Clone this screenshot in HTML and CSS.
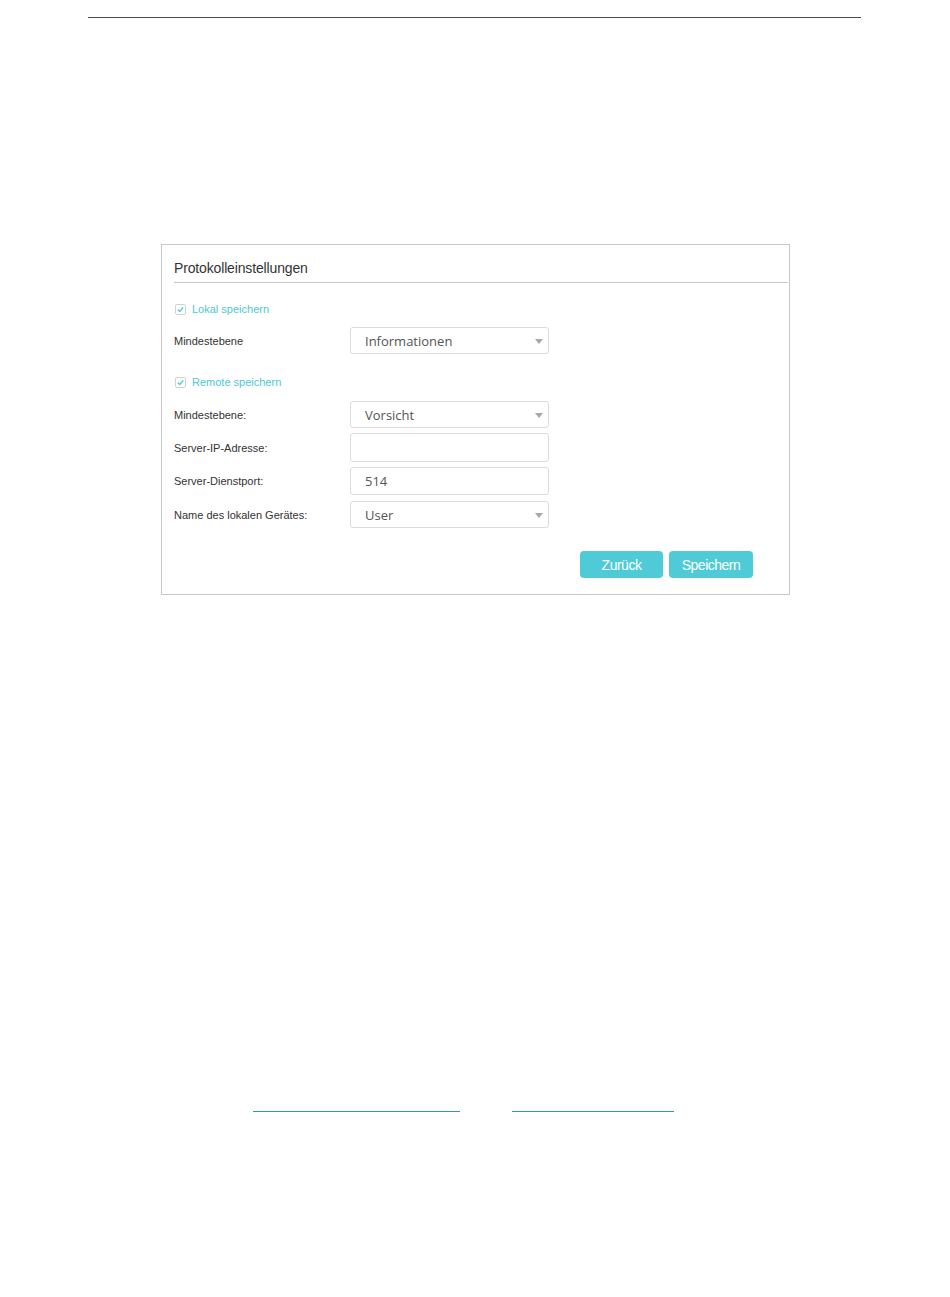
FILE: index.html
```html
<!DOCTYPE html>
<html lang="de">

<head>
    <meta charset="UTF-8" />
    <meta name="viewport" content="width=device-width, initial-scale=1.0" />
    <title>Protokolleinstellungen</title>
    <link rel="stylesheet" href="styles.css">
</head>

<body>
    <div class="page">
        <div class="top-rule"></div>

        <div class="panel">
            <div class="panel-title">Protokolleinstellungen</div>

            <div class="check-row first">
                <svg class="check" width="11" height="11" viewBox="0 0 11 11">
                    <rect x="0.5" y="0.5" width="10" height="10" rx="1.5" fill="#fff" stroke="#cfd3d6" />
                    <path d="M2.8 5.6 L4.7 7.5 L8.3 3.4" fill="none" stroke="#4ec8d5" stroke-width="1.3" />
                </svg>
                <span>Lokal speichern</span>
            </div>

            <div class="field-row r-local">
                <label>Mindestebene</label>
                <div class="field select">Informationen<i class="arrow"></i></div>
            </div>

            <div class="check-row second">
                <svg class="check" width="11" height="11" viewBox="0 0 11 11">
                    <rect x="0.5" y="0.5" width="10" height="10" rx="1.5" fill="#fff" stroke="#cfd3d6" />
                    <path d="M2.8 5.6 L4.7 7.5 L8.3 3.4" fill="none" stroke="#4ec8d5" stroke-width="1.3" />
                </svg>
                <span>Remote speichern</span>
            </div>

            <div class="field-row r-level">
                <label>Mindestebene:</label>
                <div class="field select">Vorsicht<i class="arrow"></i></div>
            </div>

            <div class="field-row r-ip">
                <label>Server-IP-Adresse:</label>
                <div class="field tall"></div>
            </div>

            <div class="field-row r-port">
                <label>Server-Dienstport:</label>
                <div class="field port">514</div>
            </div>

            <div class="field-row r-name">
                <label>Name des lokalen Gerätes:</label>
                <div class="field select">User<i class="arrow"></i></div>
            </div>

            <div class="actions">
                <button class="btn back">Zurück</button>
                <button class="btn save">Speichern</button>
            </div>
        </div>

        <div class="foot-lines">
            <span class="line one"></span>
            <span class="line two"></span>
        </div>
    </div>
</body>

</html>
```

FILE: styles.css
```css
body {
    margin: 0;
    padding: 0;
    background: #fff;
    font-family: 'Liberation Sans', Arial, sans-serif;
    color: #333;
}

.page {
    width: 950px;
    height: 1297px;
    display: flex;
    flex-direction: column;
}

.top-rule {
    margin: 17px 89px 0 88px;
    height: 1px;
    background: #4a4a4a;
}

.panel {
    margin: 226px 0 0 161px;
    width: 627px;
    border: 1px solid #c8c8c8;
    padding: 0 0 16px 0;
}

.panel-title {
    margin: 0 1px 0 12px;
    padding: 14px 0 5px 0;
    line-height: 18px;
    font-size: 14px;
    letter-spacing: -0.15px;
    color: #333;
    border-bottom: 1px solid #c8c8c8;
}

.check-row {
    display: flex;
    align-items: center;
    gap: 6px;
    height: 16px;
    padding-left: 13px;
    font-size: 11px;
    color: #4ec8d5;
}

.check-row.first {
    margin-top: 18px;
}

.check-row.second {
    margin-top: 20px;
}

.check {
    display: block;
}

.field-row {
    display: flex;
    align-items: center;
    padding-left: 12px;
}

.field-row label {
    width: 176px;
    font-size: 11px;
    color: #333;
}

.r-local {
    margin-top: 10px;
}

.r-level {
    margin-top: 11px;
}

.r-ip {
    margin-top: 5px;
}

.r-port {
    margin-top: 5px;
}

.r-name {
    margin-top: 6px;
}

.field {
    position: relative;
    box-sizing: border-box;
    width: 199px;
    height: 27px;
    padding: 0 0 0 14px;
    border: 1px solid #dcdcdc;
    border-radius: 3px;
    font-family: 'Open Sans', sans-serif;
    font-size: 13px;
    line-height: 26px;
    color: #555;
}

.field.tall {
    height: 29px;
}

.field.port {
    height: 28px;
}

.arrow {
    position: absolute;
    right: 5px;
    top: 11px;
    width: 0;
    height: 0;
    border-left: 4px solid transparent;
    border-right: 4px solid transparent;
    border-top: 5px solid #a8a8a8;
}

.actions {
    display: flex;
    justify-content: flex-end;
    gap: 6px;
    margin-top: 23px;
    padding-right: 36px;
}

.btn {
    height: 27px;
    border: none;
    border-radius: 4px;
    background: #4ecbd6;
    color: #fff;
    font-family: 'Liberation Sans', Arial, sans-serif;
    font-size: 14px;
    letter-spacing: -0.5px;
    padding: 0;
    cursor: pointer;
}

.btn.back {
    width: 83px;
}

.btn.save {
    width: 84px;
}

.foot-lines {
    display: flex;
    margin: 516px 0 0 253px;
    gap: 52px;
}

.line {
    display: block;
    height: 1px;
    background: #3a96a4;
}

.line.one {
    width: 207px;
}

.line.two {
    width: 162px;
}
```
